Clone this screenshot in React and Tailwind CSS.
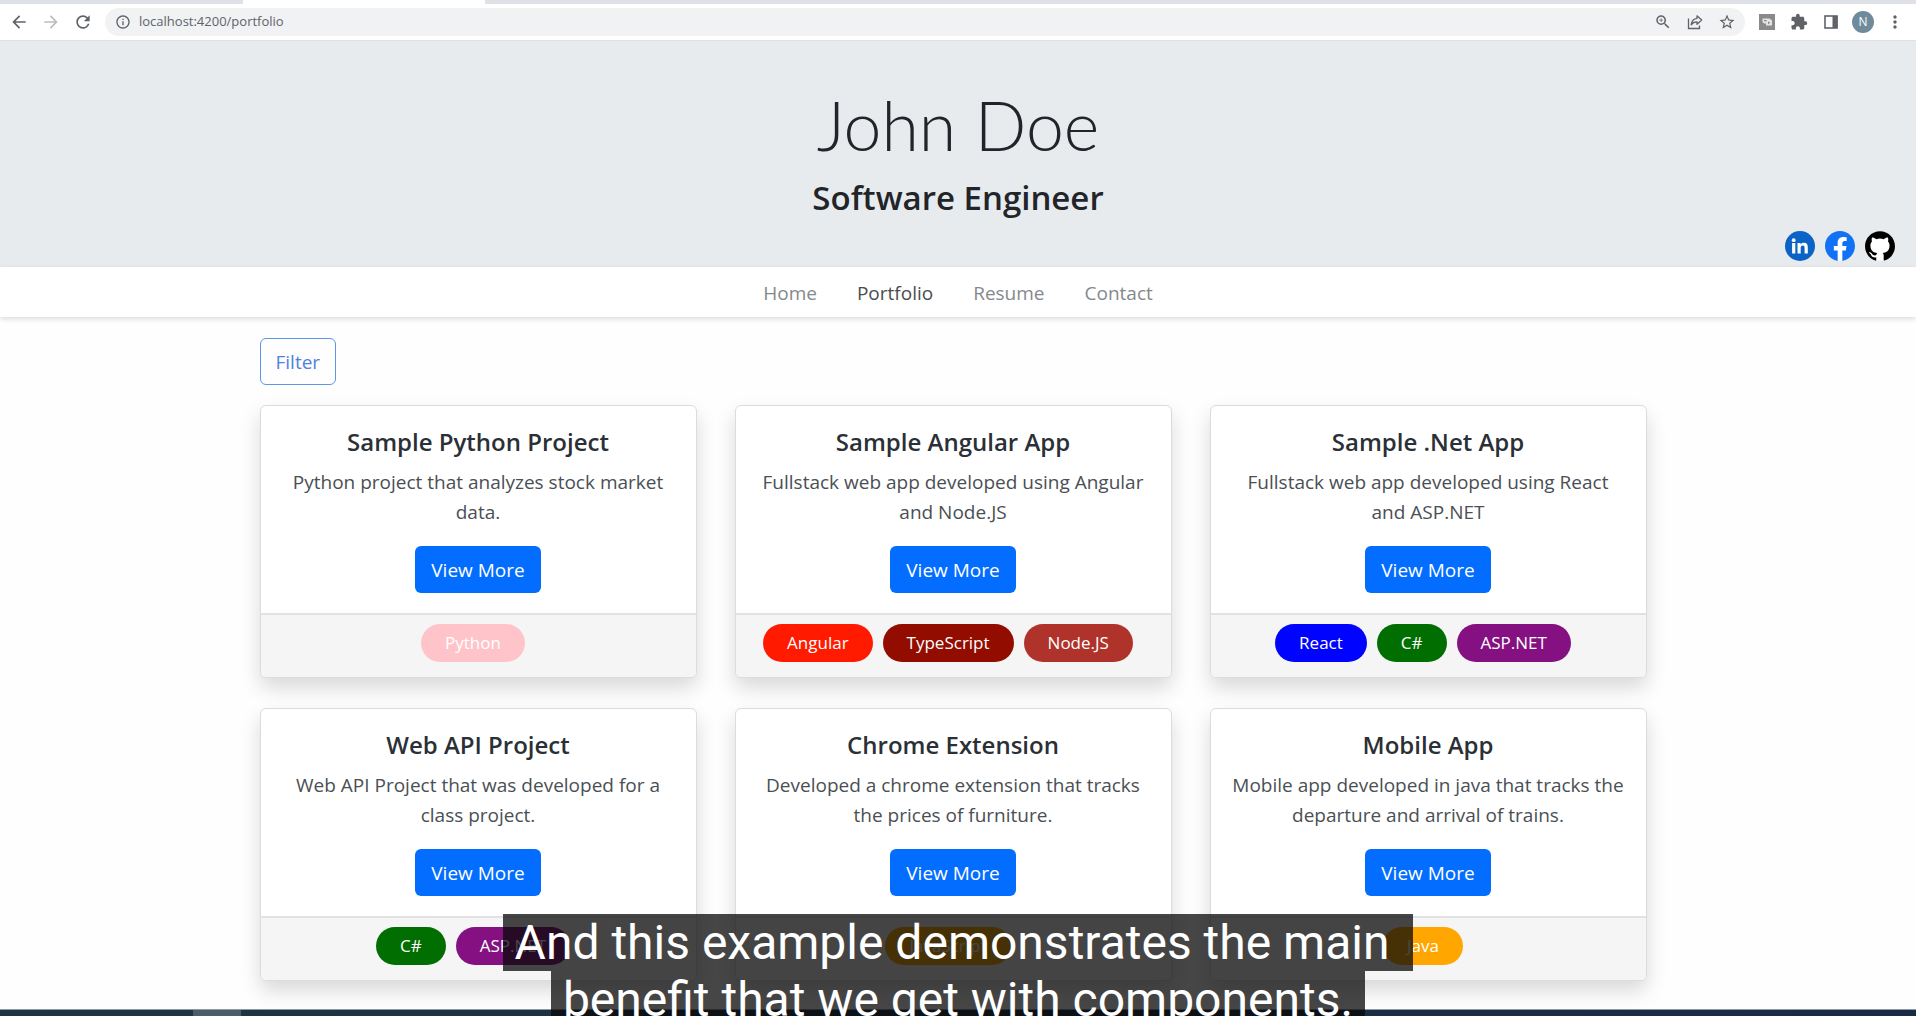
import React from "react";
import {
  MdArrowBack,
  MdArrowForward,
  MdRefresh,
  MdInfoOutline,
  MdZoomIn,
  MdStarBorder,
  MdExtension,
  MdMoreVert,
} from "react-icons/md";

const projects = [
  {
    title: "Sample Python Project",
    text: "Python project that analyzes stock market data.",
    tags: [["Python", "bg-[#ffc4ca]"]],
  },
  {
    title: "Sample Angular App",
    text: "Fullstack web app developed using Angular and Node.JS",
    tags: [
      ["Angular", "bg-[#ff1a00]"],
      ["TypeScript", "bg-[#920c00]"],
      ["Node.JS", "bg-[#b0332b]"],
    ],
  },
  {
    title: "Sample .Net App",
    text: "Fullstack web app developed using React and ASP.NET",
    tags: [
      ["React", "bg-[#0004ff]"],
      ["C#", "bg-[#006e00]"],
      ["ASP.NET", "bg-[#851081]"],
    ],
  },
  {
    title: "Web API Project",
    text: "Web API Project that was developed for a class project.",
    tags: [
      ["C#", "bg-[#006e00]"],
      ["ASP.NET", "bg-[#851081]"],
    ],
  },
  {
    title: "Chrome Extension",
    text: "Developed a chrome extension that tracks the prices of furniture.",
    tags: [["JavaScript", "bg-[#ffa600]"]],
  },
  {
    title: "Mobile App",
    text: "Mobile app developed in java that tracks the departure and arrival of trains.",
    tags: [["Java", "bg-[#ffa600]"]],
  },
];

function ShareIcon() {
  return (
    <svg viewBox="0 0 16 16" className="size-4" fill="none" stroke="currentColor" strokeWidth="1.3">
      <path d="M1.5 4.5v10h11v-3" />
      <path d="M10 1.8l4.7 4.2L10 10.2V7.8C7.500 7.800 5.600 8.600 4.200 10.800 4.600 7.200 6.600 4.700 10 4.300z" strokeLinejoin="round" />
    </svg>
  );
}

function CastIcon() {
  return (
    <svg viewBox="0 0 16 16" className="size-4">
      <rect width="16" height="16" fill="#8a8a8a" />
      <path d="M3.500 4.500h7l2.500 2v5H7V9.500H5L3.500 8z" fill="#e4e4e4" />
      <path d="M5 6h2.500v1.200H5zM9 7.500l2.300 1.300L9 10.200z" fill="#8a8a8a" />
    </svg>
  );
}

function PanelIcon() {
  return (
    <svg viewBox="0 0 14 14" className="size-3.5">
      <rect x="1" y="1" width="12" height="12" fill="none" stroke="#5f6368" strokeWidth="1.6" />
      <rect x="8.500" y="1" width="5" height="12" fill="#5f6368" />
    </svg>
  );
}

function LinkedInIcon() {
  return (
    <svg viewBox="0 0 30 30" className="size-[30px]">
      <circle cx="15" cy="15" r="15" fill="#0b63c5" />
      <g fill="#fff">
        <circle cx="8.700" cy="9.200" r="1.900" />
        <rect x="7.100" y="12" width="3.200" height="10.500" />
        <path d="M12.500 12h3.100v1.400c.6-1 1.700-1.700 3.200-1.700 3.200 0 4 2 4 4.800v6h-3.200v-5.400c0-1.400-.2-2.700-1.800-2.700s-2.100 1.200-2.100 2.600v5.500h-3.200z" />
      </g>
    </svg>
  );
}

function FacebookIcon() {
  return (
    <svg viewBox="0 0 24 24" className="size-[30px]">
      <circle cx="12" cy="12" r="11.800" fill="#fff" />
      <path
        fill="#1272f5"
        d="M24 12.073c0-6.627-5.373-12-12-12s-12 5.373-12 12c0 5.990 4.388 10.954 10.125 11.854v-8.385H7.078v-3.470h3.047V9.430c0-3.007 1.792-4.669 4.533-4.669 1.312 0 2.686.235 2.686.235v2.953H15.830c-1.491 0-1.956.925-1.956 1.874v2.250h3.328l-.532 3.470h-2.796v8.385C19.612 23.027 24 18.062 24 12.073z"
      />
    </svg>
  );
}

function GitHubIcon() {
  return (
    <svg viewBox="0 0 24 24" className="size-[30px]">
      <circle cx="12" cy="12" r="11.700" fill="#fff" />
      <path
        fill="#000"
        d="M12 .297c-6.630 0-12 5.373-12 12 0 5.303 3.438 9.800 8.205 11.385.6.113.82-.258.82-.577 0-.285-.01-1.040-.015-2.040-3.338.724-4.042-1.610-4.042-1.610C4.422 18.070 3.633 17.700 3.633 17.700c-1.087-.744.084-.729.084-.729 1.205.084 1.838 1.236 1.838 1.236 1.070 1.835 2.809 1.305 3.495.998.108-.776.417-1.305.760-1.605-2.665-.300-5.466-1.332-5.466-5.930 0-1.310.465-2.380 1.235-3.220-.135-.303-.540-1.523.105-3.176 0 0 1.005-.322 3.300 1.230.960-.267 1.980-.399 3-.405 1.020.006 2.040.138 3 .405 2.280-1.552 3.285-1.230 3.285-1.230.645 1.653.240 2.873.120 3.176.765.840 1.230 1.910 1.230 3.220 0 4.610-2.805 5.625-5.475 5.920.420.360.810 1.096.810 2.220 0 1.606-.015 2.896-.015 3.286 0 .315.210.690.825.570C20.565 22.092 24 17.592 24 12.297c0-6.627-5.373-12-12-12"
      />
    </svg>
  );
}

function ToolButton({ label, className = "", children }) {
  return (
    <button aria-label={label} className={"flex size-8 shrink-0 items-center justify-center " + className}>
      {children}
    </button>
  );
}

function Toolbar() {
  return (
    <div className="bg-white text-[#5f6368]">
      <div className="flex h-1 bg-[#dee1e6]">
        <div className="ml-[243px] w-[242px] bg-white" />
      </div>
      <div className="flex h-[37px] items-center border-b border-[#dfe1e4] pr-[5px] pl-[3px]">
        <ToolButton label="Back"><MdArrowBack className="size-5" /></ToolButton>
        <ToolButton label="Forward" className="text-[#bbbdc0]"><MdArrowForward className="size-5" /></ToolButton>
        <ToolButton label="Reload"><MdRefresh className="size-5" /></ToolButton>
        <div className="mx-1.5 flex h-7 flex-1 items-center rounded-full bg-[#f0f2f4] pr-0.5 pl-2.5">
          <MdInfoOutline className="size-4" />
          <input
            aria-label="Address"
            defaultValue="localhost:4200/portfolio"
            className="ml-2 min-w-0 flex-1 bg-transparent text-[13px] outline-none"
          />
          <ToolButton label="Zoom"><MdZoomIn className="size-[18px]" /></ToolButton>
          <ToolButton label="Share"><ShareIcon /></ToolButton>
          <ToolButton label="Bookmark"><MdStarBorder className="size-[18px]" /></ToolButton>
        </div>
        <ToolButton label="Media"><CastIcon /></ToolButton>
        <ToolButton label="Extensions"><MdExtension className="size-[18px]" /></ToolButton>
        <ToolButton label="Side panel"><PanelIcon /></ToolButton>
        <ToolButton label="Profile">
          <span className="flex size-[22px] items-center justify-center rounded-full bg-[#6f8b9b] text-xs text-white">N</span>
        </ToolButton>
        <ToolButton label="Menu"><MdMoreVert className="size-5" /></ToolButton>
      </div>
    </div>
  );
}

function Card({ project }) {
  return (
    <article className="overflow-hidden rounded-md border border-[#dcdcdc] bg-white text-center shadow-[0_10px_20px_rgba(0,0,0,0.15)]">
      <div className="px-5 pt-[21px] pb-5">
        <h2 className="mb-2.5 text-2xl leading-[30px] font-semibold text-[#2a3036]">{project.title}</h2>
        <p className="mb-[19px] text-[19px] leading-[30px] text-[#4a4f54]">{project.text}</p>
        <button className="h-[47px] rounded-md bg-[#026dfe] px-4 pt-0.5 text-[19px] text-white">View More</button>
      </div>
      <div className="flex justify-center border-t-2 border-[#e2e2e2] bg-[#f5f5f5] pt-[9px] pb-[15px]">
        {project.tags.map(([name, color]) => (
          <span key={name} className={"mr-2.5 h-[38px] rounded-full px-6 text-[17px] leading-[38px] text-white " + color}>
            {name}
          </span>
        ))}
      </div>
    </article>
  );
}

export default function App() {
  return (
    <div className="relative flex h-screen flex-col overflow-hidden bg-[#fefefe] font-['Open_Sans','Noto_Sans',sans-serif]">
      <Toolbar />
      <header className="bg-[#e8ebee] pt-[42px] text-center text-[#212529]">
        <h1 className="font-[Lato,sans-serif] text-[68px] leading-[84px] font-light">John Doe</h1>
        <p className="mt-2.5 text-[33px] leading-[42px] font-semibold">Software Engineer</p>
        <div className="flex justify-end gap-2.5 pt-3 pr-[21px] pb-1.5">
          <a href="#linkedin" aria-label="LinkedIn"><LinkedInIcon /></a>
          <a href="#facebook" aria-label="Facebook"><FacebookIcon /></a>
          <a href="#github" aria-label="GitHub"><GitHubIcon /></a>
        </div>
      </header>
      <nav className="flex h-[50px] shrink-0 items-center justify-center gap-10 bg-white pt-0.5 text-[19px] text-[#85898c] shadow-[0_2px_5px_rgba(0,0,0,0.14)]">
        <a href="#home">Home</a>
        <a href="#portfolio" aria-current="page" className="text-[#4a4c4e]">Portfolio</a>
        <a href="#resume">Resume</a>
        <a href="#contact">Contact</a>
      </nav>
      <main className="flex-1 pt-[21px] pr-2.5">
        <div className="mx-auto max-w-[1387px]">
          <button className="mb-5 h-[47px] rounded-md border border-[#5c96ea] px-[15px] pt-0.5 text-[19px] text-[#4d82e0]">Filter</button>
          <div className="grid grid-cols-3 gap-x-[38px] gap-y-[30px]">
            {projects.map((p) => (
              <Card key={p.title} project={p} />
            ))}
          </div>
        </div>
      </main>
      <div className="absolute inset-x-0 bottom-0 flex h-[7px] border-t border-[#8d9aa2] bg-linear-to-r from-[#1d3542] to-[#1a2a46]">
        <div className="ml-[193px] w-12 bg-[#4a5d69]" />
      </div>
      <div className="absolute inset-x-0 top-[914px] flex flex-col items-center font-[Roboto,sans-serif] text-[48px] leading-[57px] whitespace-pre text-white">
        <span className="bg-[#080808]/75 px-3">{"And this example demonstrates the main "}</span>
        <span className="bg-[#080808]/75 px-3">{"benefit that we get with components."}</span>
      </div>
    </div>
  );
}
